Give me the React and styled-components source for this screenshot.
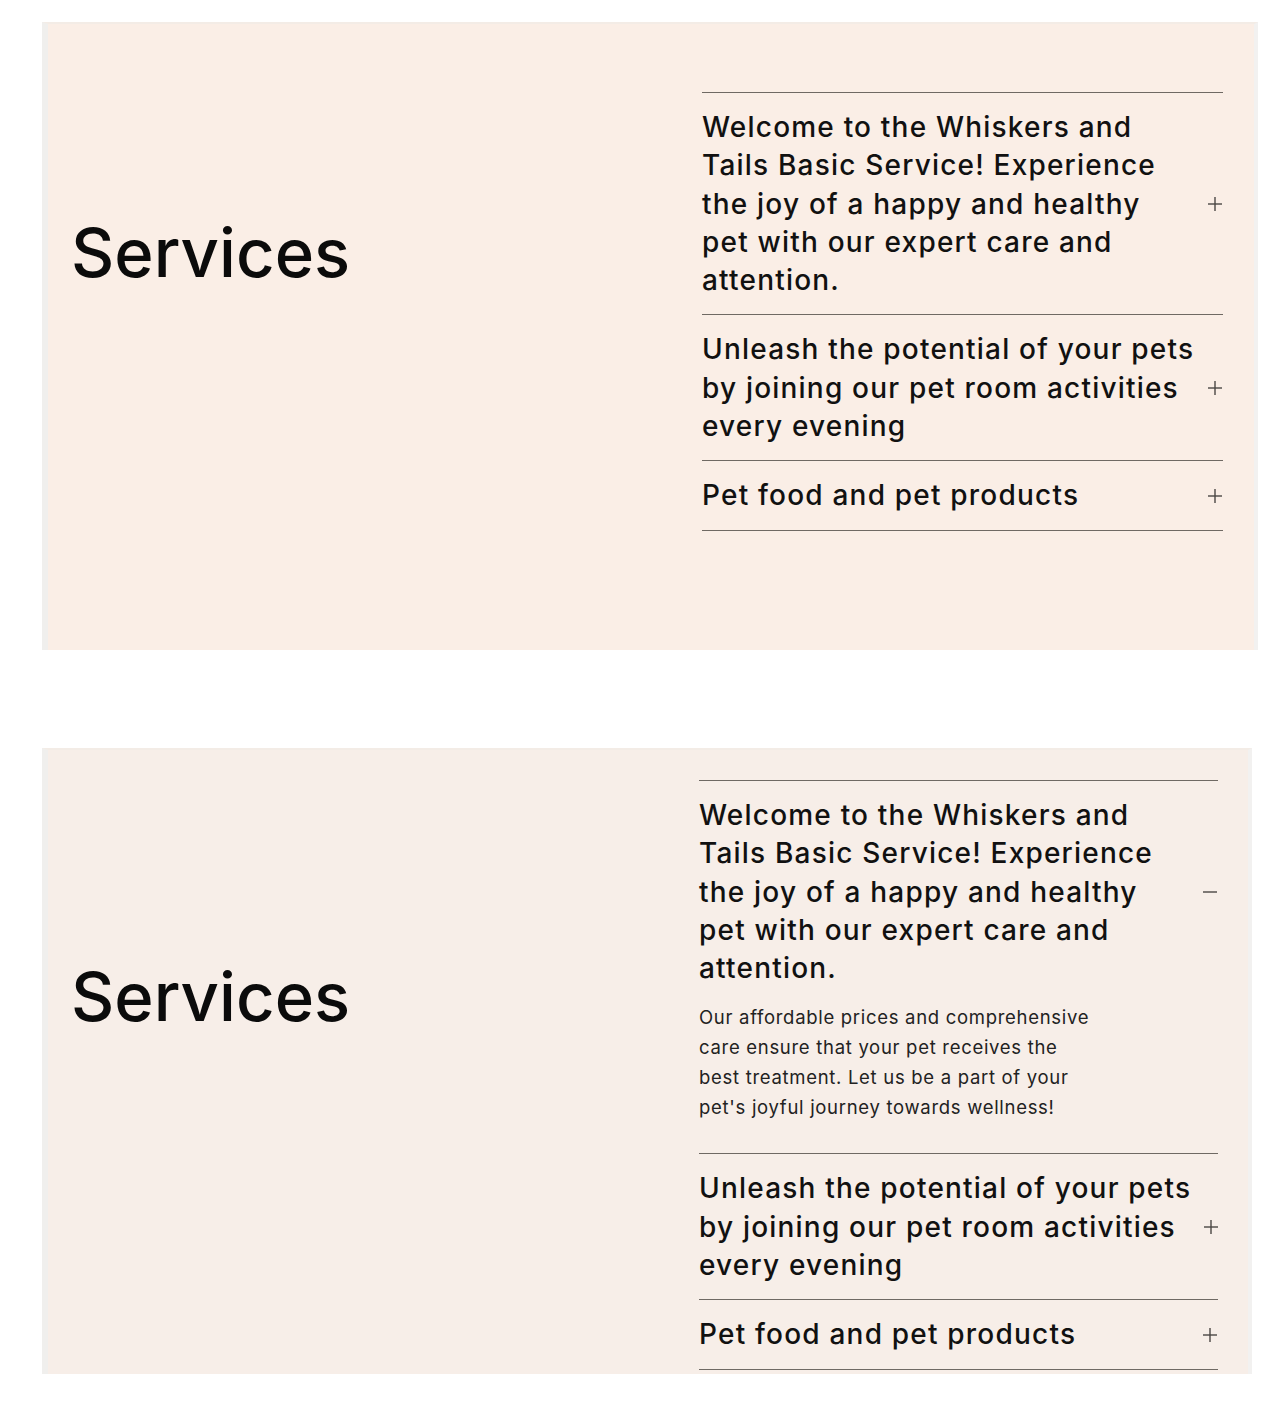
import React, { useState } from 'react';
import styled, { createGlobalStyle } from 'styled-components';

const GlobalStyle = createGlobalStyle`
  body {
    margin: 0;
    background: #ffffff;
    font-family: Inter, "Noto Sans", sans-serif;
    color: #111111;
  }
`;

const services = [
  {
    title: 'Welcome to the Whiskers and\nTails Basic Service! Experience\nthe joy of a happy and healthy\npet with our expert care and\nattention.',
    body: "Our affordable prices and comprehensive\ncare ensure that your pet receives the\nbest treatment. Let us be a part of your\npet's joyful journey towards wellness!"
  },
  {
    title: 'Unleash the potential of your pets\nby joining our pet room activities\nevery evening',
    body: 'Fun games, group play and gentle training\nsessions led by our friendly staff.'
  },
  {
    title: 'Pet food and pet products',
    body: 'Quality food, treats, toys and accessories\nchosen for your companion.'
  }
];

const PlusIcon = ({ open }) => (
  <svg width="16" height="16" viewBox="0 0 16 16" fill="none">
    <line x1="1" y1="8" x2="15" y2="8" stroke="#4a4744" strokeWidth="1.4" />
    {!open && <line x1="8" y1="1" x2="8" y2="15" stroke="#4a4744" strokeWidth="1.4" />}
  </svg>
);

const Accordion = ({ defaultOpen, width }) => {
  const [openIndex, setOpenIndex] = useState(defaultOpen);

  const toggle = (i) => {
    setOpenIndex(openIndex === i ? -1 : i);
  };

  return (
    <StyledAccordion width={width}>
      {services.map((item, i) => (
        <StyledItem key={i}>
          <StyledTrigger onClick={() => toggle(i)}>
            <StyledTitle>{item.title}</StyledTitle>
            <StyledIcon>
              <PlusIcon open={openIndex === i} />
            </StyledIcon>
          </StyledTrigger>
          {openIndex === i && <StyledBody>{item.body}</StyledBody>}
        </StyledItem>
      ))}
    </StyledAccordion>
  );
};

const ServicesPanel = (props) => (
  <StyledPanel width={props.width} height={props.height} bg={props.bg} padTop={props.padTop}
    rightPad={props.rightPad}>
    <StyledHeadingCol>
      <StyledHeading offset={props.headingOffset}>Services</StyledHeading>
    </StyledHeadingCol>
    <Accordion defaultOpen={props.defaultOpen} width={props.accordionWidth} />
  </StyledPanel>
);

const App = () => (
  <StyledPage>
    <GlobalStyle />
    <ServicesPanel width={1216} height={628} bg="#faeee6" padTop={68} rightPad={31}
      accordionWidth={521} headingOffset={127} defaultOpen={-1} />
    <ServicesPanel width={1210} height={626} bg="#f7eee8" padTop={30} rightPad={30}
      accordionWidth={519} headingOffset={183} defaultOpen={0} />
  </StyledPage>
);

const StyledPage = styled.div`
  display: flex;
  flex-direction: column;
  gap: 98px;
  padding: 22px 0 40px 42px;
`;

const StyledPanel = styled.section`
  box-sizing: border-box;
  width: ${p => p.width}px;
  height: ${p => p.height}px;
  overflow: hidden;
  display: grid;
  grid-template-columns: 1fr auto;
  align-items: start;
  padding: ${p => p.padTop}px ${p => p.rightPad}px 0 23px;
  background-color: ${p => p.bg};
  border-left: 6px solid #f0efed;
  border-right: 4px solid #f2f1f0;
  border-top: 2px solid #f3ece6;
`;

const StyledHeadingCol = styled.div`
  display: flex;
  flex-direction: column;
`;

const StyledHeading = styled.h2`
  margin: ${p => p.offset}px 0 0 0;
  font-family: Inter, "Noto Sans", sans-serif;
  font-size: 67px;
  line-height: 1;
  font-weight: 500;
  letter-spacing: 0;
  color: #0b0b0b;
`;

const StyledAccordion = styled.div`
  width: ${p => p.width}px;
  border-bottom: 1px solid #6f6963;
`;

const StyledItem = styled.div`
  border-top: 1px solid #6f6963;
`;

const StyledTrigger = styled.button`
  width: 100%;
  display: flex;
  align-items: center;
  justify-content: space-between;
  gap: 12px;
  padding: 15px 0;
  margin: 0;
  border: none;
  background: none;
  cursor: pointer;
  text-align: left;
`;

const StyledTitle = styled.span`
  white-space: pre;
  font-family: Inter, "Noto Sans", sans-serif;
  font-size: 28px;
  line-height: 38.3px;
  font-weight: 500;
  letter-spacing: 1.2px;
  color: #111111;
`;

const StyledIcon = styled.span`
  display: inline-flex;
  flex-shrink: 0;
`;

const StyledBody = styled.p`
  margin: 0;
  padding: 0 0 31px 0;
  white-space: pre;
  font-family: Inter, "Noto Sans", sans-serif;
  font-size: 18.5px;
  line-height: 30px;
  font-weight: 400;
  letter-spacing: 0.7px;
  color: #222222;
`;

export default App;
